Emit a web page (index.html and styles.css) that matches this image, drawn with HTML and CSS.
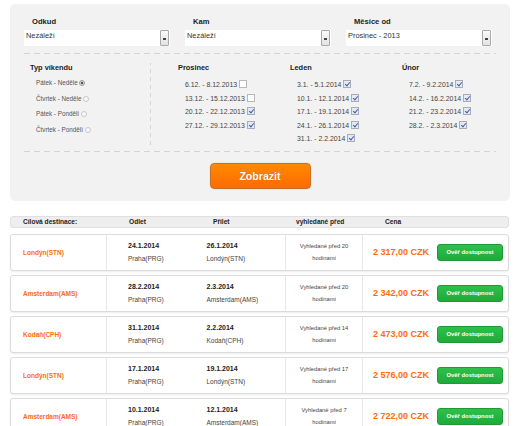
FILE: index.html
```html
<html>
<head>
  <meta charset="utf-8">
  <title>Víkendové lety</title>
  <link rel="stylesheet" href="styles.css">
</head>
<body>

<div class="search">
  <div class="fields">
    <div class="field">
      <label>Odkud</label>
      <div class="select"><span class="value">Nezáleží</span><span class="arrow"></span></div>
    </div>
    <div class="field">
      <label>Kam</label>
      <div class="select"><span class="value">Nezáleží</span><span class="arrow"></span></div>
    </div>
    <div class="field">
      <label>Měsíce od</label>
      <div class="select"><span class="value">Prosinec - 2013</span><span class="arrow"></span></div>
    </div>
  </div>

  <div class="dash"></div>

  <div class="options">
    <div class="col col-type">
      <h3>Typ víkendu</h3>
      <div class="radio-item">Pátek - Neděle <span class="radio on"></span></div>
      <div class="radio-item">Čtvrtek - Neděle <span class="radio"></span></div>
      <div class="radio-item">Pátek - Pondělí <span class="radio"></span></div>
      <div class="radio-item">Čtvrtek - Pondělí <span class="radio"></span></div>
    </div>
    <div class="col">
      <h3>Prosinec</h3>
      <div class="check-item">6.12. - 8.12.2013 <span class="box"></span></div>
      <div class="check-item">13.12. - 15.12.2013 <span class="box"></span></div>
      <div class="check-item">20.12. - 22.12.2013 <span class="box on"></span></div>
      <div class="check-item">27.12. - 29.12.2013 <span class="box on"></span></div>
    </div>
    <div class="col">
      <h3>Leden</h3>
      <div class="check-item">3.1. - 5.1.2014 <span class="box on"></span></div>
      <div class="check-item">10.1. - 12.1.2014 <span class="box on"></span></div>
      <div class="check-item">17.1. - 19.1.2014 <span class="box on"></span></div>
      <div class="check-item">24.1. - 26.1.2014 <span class="box on"></span></div>
      <div class="check-item">31.1. - 2.2.2014 <span class="box on"></span></div>
    </div>
    <div class="col">
      <h3>Únor</h3>
      <div class="check-item">7.2. - 9.2.2014 <span class="box on"></span></div>
      <div class="check-item">14.2. - 16.2.2014 <span class="box on"></span></div>
      <div class="check-item">21.2. - 23.2.2014 <span class="box on"></span></div>
      <div class="check-item">28.2. - 2.3.2014 <span class="box on"></span></div>
    </div>
  </div>

  <div class="dash dash-bottom"></div>

  <div class="submit-row">
    <button class="btn-show">Zobrazit</button>
  </div>
</div>

<div class="results">
  <div class="results-head">
    <span class="h-dest">Cílová destinace:</span>
    <span class="h-out">Odlet</span>
    <span class="h-in">Přílet</span>
    <span class="h-found">vyhledané před</span>
    <span class="h-price">Cena</span>
  </div>

  <div class="row">
    <div class="dest">Londýn(STN)</div>
    <div class="flight">
      <div class="leg"><b>24.1.2014</b><span>Praha(PRG)</span></div>
      <div class="leg"><b>26.1.2014</b><span>Londýn(STN)</span></div>
    </div>
    <div class="found">Vyhledané před 20<br>hodinami</div>
    <div class="buy">
      <span class="price">2 317,00 CZK</span>
      <button class="btn-check">Ověř dostupnost</button>
    </div>
  </div>

  <div class="row">
    <div class="dest">Amsterdam(AMS)</div>
    <div class="flight">
      <div class="leg"><b>28.2.2014</b><span>Praha(PRG)</span></div>
      <div class="leg"><b>2.3.2014</b><span>Amsterdam(AMS)</span></div>
    </div>
    <div class="found">Vyhledané před 20<br>hodinami</div>
    <div class="buy">
      <span class="price">2 342,00 CZK</span>
      <button class="btn-check">Ověř dostupnost</button>
    </div>
  </div>

  <div class="row">
    <div class="dest">Kodaň(CPH)</div>
    <div class="flight">
      <div class="leg"><b>31.1.2014</b><span>Praha(PRG)</span></div>
      <div class="leg"><b>2.2.2014</b><span>Kodaň(CPH)</span></div>
    </div>
    <div class="found">Vyhledané před 14<br>hodinami</div>
    <div class="buy">
      <span class="price">2 473,00 CZK</span>
      <button class="btn-check">Ověř dostupnost</button>
    </div>
  </div>

  <div class="row">
    <div class="dest">Londýn(STN)</div>
    <div class="flight">
      <div class="leg"><b>17.1.2014</b><span>Praha(PRG)</span></div>
      <div class="leg"><b>19.1.2014</b><span>Londýn(STN)</span></div>
    </div>
    <div class="found">Vyhledané před 17<br>hodinami</div>
    <div class="buy">
      <span class="price">2 576,00 CZK</span>
      <button class="btn-check">Ověř dostupnost</button>
    </div>
  </div>

  <div class="row">
    <div class="dest">Amsterdam(AMS)</div>
    <div class="flight">
      <div class="leg"><b>10.1.2014</b><span>Praha(PRG)</span></div>
      <div class="leg"><b>12.1.2014</b><span>Amsterdam(AMS)</span></div>
    </div>
    <div class="found">Vyhledané před 7<br>hodinami</div>
    <div class="buy">
      <span class="price">2 722,00 CZK</span>
      <button class="btn-check">Ověř dostupnost</button>
    </div>
  </div>
</div>

</body>
</html>
```

FILE: styles.css
```css
:root {
  --orange: #ff6c0c;
  --panel: #f2f2f2;
  --text: #222;
}

* {
  box-sizing: border-box;
}

body {
  margin: 0;
  padding: 4px 10px 0;
  font-family: 'Liberation Sans', Arial, sans-serif;
  color: var(--text);
  background: #fff;
}

/* search panel */

.search {
  width: 500px;
  background: var(--panel);
  border-radius: 5px;
  padding: 13px 14px 12px;
}

.fields {
  display: flex;
  gap: 15px;
}

.field {
  width: 146px;
}

.field label {
  display: block;
  font-size: 7.6px;
  font-weight: bold;
  line-height: 10px;
  padding-left: 8px;
  margin-bottom: 3px;
}

.select {
  display: flex;
  height: 16px;
  background: #fff;
}

.select .value {
  flex: 1;
  font-size: 7.4px;
  line-height: 11px;
  padding-left: 2px;
  color: #333;
}

.select .arrow {
  width: 9px;
  margin: 0 1px;
  border: 1px solid #aaa;
  border-radius: 1px;
  background: linear-gradient(#fafafa, #e2e2e2);
  position: relative;
}

.select .arrow::after {
  content: "";
  position: absolute;
  left: 2px;
  top: 7px;
  width: 3px;
  height: 2px;
  background: #444;
}

.dash {
  height: 1px;
  margin: 7px 0 0;
  background: repeating-linear-gradient(to right, #d4d4d4 0 6px, transparent 6px 10px);
}

.dash-bottom {
  margin-top: 0;
}

.options {
  display: grid;
  grid-template-columns: 127px 112px 112px 1fr;
  padding: 9px 0 5px;
}

.col {
  padding-left: 27px;
}

.col-type {
  padding-left: 6px;
  background: repeating-linear-gradient(to bottom, #d4d4d4 0 4px, transparent 4px 8px) right -2px / 1px 84px no-repeat;
}

.col h3 {
  margin: 0 0 5px;
  font-size: 7.4px;
  line-height: 10px;
}

.col-type h3 {
  margin-bottom: 2px;
}

.radio-item {
  font-size: 6.3px;
  line-height: 15.6px;
  color: #555;
  padding-left: 6px;
}

.check-item {
  font-size: 6.9px;
  line-height: 13.5px;
  color: #444;
  padding-left: 7px;
}

.radio {
  display: inline-block;
  width: 6px;
  height: 6px;
  border-radius: 50%;
  border: 1px solid #c8c8c8;
  background: #f8f8f8;
  vertical-align: -1px;
}

.radio.on {
  border-color: #999;
  background: radial-gradient(#556 0 1.3px, #ddd 1.6px);
}

.box {
  display: inline-block;
  width: 8px;
  height: 8px;
  border: 1px solid #b8b8b8;
  background: #fff;
  vertical-align: -1px;
  position: relative;
}

.box.on {
  background: #e6eaf0;
  border-color: #aab;
}

.box.on::after {
  content: "";
  position: absolute;
  left: 2px;
  top: 0;
  width: 2px;
  height: 4px;
  border: solid #3b62b8;
  border-width: 0 1px 1px 0;
  transform: rotate(40deg);
}

.submit-row {
  display: flex;
  justify-content: center;
  padding-top: 11px;
}

.btn-show {
  width: 101px;
  height: 26px;
  border: 1px solid #c9712a;
  border-radius: 4px;
  background: linear-gradient(#ff8a00, #ff6a00);
  color: #fff;
  font-family: inherit;
  font-size: 10.6px;
  font-weight: bold;
  text-shadow: 0 0 1px rgba(0,0,0,0.3);
  box-shadow: 0 0 0 1px #e9e9e9;
  cursor: pointer;
}

/* results */

.results {
  margin-top: 15px;
  width: 499px;
}

.results-head {
  display: flex;
  height: 12px;
  background: #eee;
  border: 1px solid #e0e0e0;
  border-radius: 3px;
  font-size: 6.6px;
  font-weight: bold;
  line-height: 10px;
}

.results-head span {
  flex: none;
}

.h-dest { width: 118px; padding-left: 12px; }
.h-out { width: 84px; }
.h-in { width: 83px; }
.h-found { width: 89px; }

.row {
  display: grid;
  grid-template-columns: 96px 179px 77px 1fr;
  height: 37px;
  margin-top: 4px;
  background: #fff;
  border: 1px solid #dcdcdc;
  border-radius: 3px;
  box-shadow: 0 1px 2px rgba(0,0,0,0.08);
}

.results-head + .row {
  margin-top: 6px;
}

.row > div {
  display: flex;
  align-items: center;
}

.dest {
  padding-left: 12px;
  font-size: 6.5px;
  font-weight: bold;
  color: var(--orange);
  border-right: 1px solid #e8e8e8;
}

.flight {
  padding-left: 21px;
  border-right: 1px solid #e8e8e8;
}

.leg {
  width: 83px;
  display: flex;
  flex-direction: column;
  line-height: 13px;
}

.leg b {
  font-size: 7px;
}

.leg span {
  font-size: 6.5px;
  color: #444;
}

.found {
  justify-content: center;
  text-align: center;
  font-size: 5.8px;
  line-height: 12px;
  color: #444;
  border-right: 1px solid #e8e8e8;
}

.buy {
  justify-content: space-between;
  padding: 0 5px 0 10px;
}

.price {
  font-size: 9px;
  font-weight: bold;
  color: var(--orange);
}

.btn-check {
  width: 66px;
  height: 17px;
  padding: 0;
  border: 1px solid #1c9a34;
  border-radius: 3px;
  background: linear-gradient(#2ec04a, #1faa3a);
  color: #fff;
  font-family: inherit;
  font-size: 5.9px;
  font-weight: bold;
  cursor: pointer;
}
```
